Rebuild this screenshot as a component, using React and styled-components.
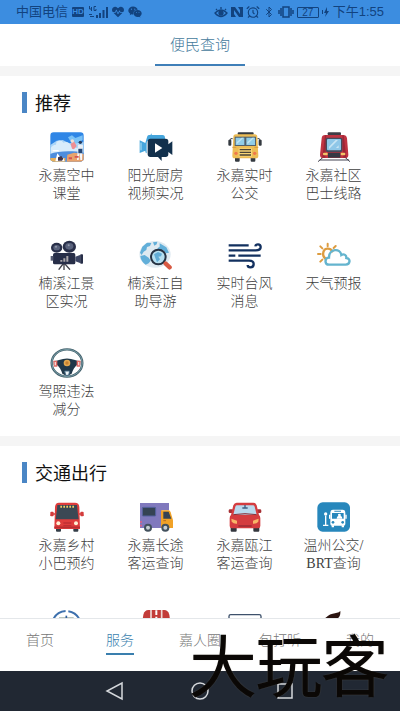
import React from "react";
import styled, { createGlobalStyle } from "styled-components";
import { AlarmClock, Bluetooth } from "lucide-react";
import { FaHeartbeat, FaWeixin } from "react-icons/fa";

const GlobalStyle = createGlobalStyle`
  * {
    box-sizing: border-box;
  }

  body {
    margin: 0;
    background: #fff;
    font-family: "Liberation Serif", "Noto Sans CJK SC", serif;
    font-weight: 300;
  }

  button {
    margin: 0;
    padding: 0;
    border: 0;
    background: none;
    font: inherit;
    cursor: pointer;
  }
`;

const Screen = styled.div`
  display: flex;
  flex-direction: column;
  height: 100vh;
  overflow: hidden;
`;

const StatusBar = styled.header`
  display: flex;
  flex: none;
  align-items: center;
  justify-content: space-between;
  height: 24px;
  padding: 0 16px;
  background: #3c8de0;
  color: #12437f;
  font-family: "Liberation Sans", "Noto Sans CJK SC", sans-serif;
  font-size: 13px;
  font-weight: 400;
  line-height: 24px;
`;

const StatusGroup = styled.div`
  display: flex;
  align-items: center;
  gap: ${(props) => props.$gap}px;

  svg {
    display: block;
    flex: none;
  }
`;

const HdBadge = styled.span`
  width: 12px;
  height: 10px;
  border-radius: 1px;
  background: #12437f;
  color: #3c8de0;
  font-size: 8px;
  font-weight: 700;
  line-height: 10px;
  text-align: center;
`;

const Battery = styled.span`
  width: 22px;
  height: 11px;
  border: 1px solid #12437f;
  border-radius: 1px;
  font-size: 10px;
  line-height: 10px;
  text-align: center;
`;

const TopTabs = styled.nav`
  display: flex;
  flex: none;
  justify-content: center;
  height: 42px;
  background: #fff;
`;

const TopTab = styled.button`
  width: 90px;
  border-bottom: 2px solid #3f7fb8;
  color: #447a9c;
  font-size: 15px;
  line-height: 42px;
`;

const Content = styled.main`
  display: flex;
  flex: 1;
  flex-direction: column;
  gap: 10px;
  min-height: 0;
  padding-top: 10px;
  overflow: hidden;
  background: #f5f5f5;
`;

const Section = styled.section`
  flex: none;
  padding: 16px 22px 18px;
  background: #fff;
`;

const SectionTitle = styled.h2`
  height: 21px;
  margin: 0 0 19px;
  padding-left: 8px;
  border-left: 5px solid #4a86c5;
  color: #111;
  font-size: 18px;
  font-weight: 400;
  line-height: 24px;
`;

const Grid = styled.div`
  display: grid;
  grid-template-columns: repeat(4, 1fr);
  row-gap: 38px;
`;

const Tile = styled.button`
  display: flex;
  flex-direction: column;
  align-items: center;
  gap: 5px;
  height: 70px;
`;

const TileIcon = styled.svg`
  display: block;
  flex: none;
  width: 34px;
  height: 30px;
`;

const TileLabel = styled.span`
  color: #404040;
  font-size: 14px;
  line-height: 18px;
  text-align: center;
  white-space: pre;
`;

const BottomNav = styled.nav`
  display: grid;
  flex: none;
  grid-template-columns: repeat(5, 1fr);
  height: 53px;
  border-top: 1px solid #e4e7ea;
  background: #fff;
`;

const NavItem = styled.button`
  display: flex;
  flex-direction: column;
  align-items: center;
  padding-top: 10px;
  color: ${(props) => (props.$active ? "#3a7fae" : "#777")};
  font-size: 14px;
  line-height: 24px;

  span {
    height: 26px;
    border-bottom: 2px solid
      ${(props) => (props.$active ? "#3a7fae" : "transparent")};
  }
`;

const SystemBar = styled.footer`
  display: flex;
  flex: none;
  align-items: center;
  justify-content: center;
  gap: 65px;
  height: 40px;
  background: #212833;

  button {
    height: 20px;
  }

  svg {
    display: block;
  }
`;

const Watermark = styled.div`
  position: fixed;
  right: 12px;
  bottom: 9px;
  color: #0b0806;
  font-family: "Noto Sans CJK SC", sans-serif;
  font-size: 66px;
  font-weight: 300;
  line-height: 80px;
  white-space: nowrap;
  pointer-events: none;
  -webkit-text-stroke: 2px #0b0806;
  text-shadow: 0 0 2px #b5a581;
`;

const Icon = ({ children }) => (
  <TileIcon viewBox="0 0 102 90" aria-hidden="true">
    {children}
  </TileIcon>
);

const ClassroomIcon = () => (
  <Icon>
    <clipPath id="classroom">
      <rect x="1" y="1" width="100" height="88" rx="10" />
    </clipPath>
    <g clipPath="url(#classroom)">
      <rect width="102" height="90" fill="#2f86e6" />
      <path d="M0 40l20-14 18-2 20 10 44-4v60H0z" fill="#a9d4f7" />
      <path d="M18 38c0-14 16-16 22-6 12-6 22 2 24 12l26 6v20H2V48c4-6 8-10 16-10z" fill="#d8ecfb" />
      <path d="M54 16l12-6 10 8 22-8v14L80 34l-14 2z" fill="#7cc3f6" />
      <path d="M0 66c24-10 70-10 102-4v28H0z" fill="#4d8ddd" />
      <path d="M52 68l20-6 30 4v24H50z" fill="#e9a36c" />
      <path d="M0 78h46v12H0z" fill="#e8b05c" />
      <path d="M84 40h14l-2 44h-5l-2-24-3 24h-5z" fill="#f4f6fa" />
      <path d="M84 38h14v10H84z" fill="#e8eef6" />
      <path d="M85 50h12v14H85z" fill="#254777" />
      <circle cx="91" cy="31" r="5" fill="#293b5d" />
      <path d="M62 36l10-8 8 14-8 10-6-2z" fill="#ee8f94" />
      <circle cx="67" cy="27" r="5" fill="#f4ddd2" />
      <path d="M22 64l8 10 10 4 4 10H16z" fill="#fff" />
      <path d="M24 76l10-4 6 8-4 6H24z" fill="#40364d" />
      <path d="M56 76h10v6H56zM74 72h12v5H74z" fill="#d45454" />
      <path d="M8 54h18v4H8z" fill="#fff" />
    </g>
  </Icon>
);

const VideoIcon = () => (
  <Icon>
    <path d="M24 16c1-7 5-7 10-7l4-5v5h32c6 0 8 4 8 9v6H34c-8 0-11 4-11 11v29c-3-1-4-3-4-8l-17 7V25l17 8z" fill="#45a5dc" />
    <path d="M34 20h46c6 0 8 3 8 8v9l12-9v41l-12-9v7c0 6-3 8-8 8H68v12L57 75H34c-5 0-8-3-8-8V29c0-6 3-9 8-9z" fill="#12304c" />
    <path d="M48 34l22 14-22 14z" fill="#fff" />
    <path d="M6 32v23" stroke="#b5e2f5" strokeWidth="3" />
  </Icon>
);

const YellowBusIcon = () => (
  <Icon>
    <rect x="29" y="1" width="48" height="8" rx="3" fill="#343a40" />
    <path d="M14 20H9q-3 0-3 5v8M88 20h5q3 0 3 5v8" stroke="#343a40" strokeWidth="3" fill="none" />
    <rect x="1" y="23" width="9" height="18" rx="3" fill="#343a40" />
    <rect x="92" y="23" width="9" height="18" rx="3" fill="#343a40" />
    <rect x="21" y="74" width="14" height="15" rx="3" fill="#343a40" />
    <rect x="68" y="74" width="14" height="15" rx="3" fill="#343a40" />
    <path d="M24 7h56q8 0 8 8l3 56q0 8-7 8H20q-7 0-7-8l3-56q0-8 8-8z" fill="#edbd55" />
    <path d="M20 14h64v28H20z" fill="#52616c" />
    <path d="M23 17h26v22H23zM55 17h26v22H55z" fill="#91cde8" />
    <path d="M26 31l15-14h6L26 37zM58 31l15-14h6L58 37z" fill="#bfe4f2" />
    <path d="M32 49h40v25H32z" fill="#f9d676" />
    <path d="M35 53h34M35 61h34M35 69h34" stroke="#4b4538" strokeWidth="4" />
    <circle cx="24" cy="64" r="5" fill="#ef784c" />
    <circle cx="80" cy="64" r="5" fill="#ef784c" />
    <path d="M13 46h12M79 46h12" stroke="#d99b3d" strokeWidth="3" />
  </Icon>
);

const TramIcon = () => (
  <Icon>
    <rect x="32" y="1" width="40" height="9" rx="3" fill="#3f3c46" />
    <path d="M18 76L3 89M84 76l15 13M8 84h88" stroke="#454552" strokeWidth="3" />
    <path d="M24 9h55q9 0 11 10l4 49q0 10-9 10H18q-9 0-9-10l5-49q1-10 10-10z" fill="#bf3342" />
    <path d="M24 10l-8 67h9l3-67zM80 10l8 67h-9l-3-67z" fill="#9c2637" />
    <rect x="26" y="17" width="50" height="43" rx="5" fill="#464b5c" />
    <rect x="30" y="21" width="42" height="34" rx="3" fill="#8fc7e8" />
    <path d="M36 44l20-20h7L36 51zM57 48l8-8v8z" fill="#c8e5f4" />
    <rect x="33" y="62" width="37" height="15" fill="#363844" />
    <rect x="18" y="62" width="14" height="8" rx="3" fill="#f3c468" />
    <rect x="71" y="62" width="14" height="8" rx="3" fill="#f3c468" />
  </Icon>
);

const ProjectorIcon = () => (
  <Icon>
    <path d="M39 72L26 89M42 72v18M45 72l15 17" stroke="#44444c" strokeWidth="4" />
    <ellipse cx="20" cy="23" rx="17" ry="15" fill="#292f49" />
    <ellipse cx="58" cy="20" rx="20" ry="18" fill="#292f49" />
    <ellipse cx="20" cy="23" rx="10" ry="8" fill="#5a637d" />
    <ellipse cx="58" cy="19" rx="12" ry="10" fill="#5a637d" />
    <circle cx="18" cy="20" r="3" fill="#969cad" />
    <circle cx="56" cy="16" r="3" fill="#969cad" />
    <rect x="9" y="39" width="67" height="34" rx="5" fill="#272e48" />
    <path d="M76 50l16-6v26l-16-6z" fill="#3c4564" />
    <rect x="91" y="43" width="8" height="28" rx="2" fill="#272e48" />
    <rect x="2" y="48" width="8" height="14" fill="#565c72" />
    <path d="M31 65h6v-5h-6zM40 65h6V55h-6zM49 65h6V48h-6z" fill="#aaa6a9" />
  </Icon>
);

const GlobeIcon = () => (
  <Icon>
    <ellipse cx="48" cy="43" rx="47" ry="40" fill="#dfeaf1" />
    <path d="M10 20l14-12 13 1-4 9-9 3-2 9-8 5-6 10-5-7zM42 7l13-2-2 8-7 4zM62 10l20 12 8 16-9 2-8-9-10 3-8-9 7-5zM4 48l13-3 12 8 6 9-6 8-9 4C11 68 5 60 4 48z" fill="#62afd9" />
    <circle cx="58" cy="51" r="22" fill="#b6dff0" stroke="#263243" strokeWidth="6" />
    <path d="M45 43l12-7 12 5-3 8-8 1 5 8-9 9-5-13z" fill="#62acd6" />
    <path d="M74 66l6 6" stroke="#263243" strokeWidth="6" />
    <path d="M80 71l12 11" stroke="#d85a43" strokeWidth="13" strokeLinecap="round" />
  </Icon>
);

const WindIcon = () => (
  <Icon>
    <g fill="none" stroke="#12305f" strokeWidth="7">
      <path d="M2 16h60M2 31h81q15 0 15-10 0-8-8-8-7 0-8 6" />
      <path d="M2 47h20M31 47h67" />
      <path d="M2 62h43M2 62h61q14 0 14 10 0 10-10 10-8 0-8-7" />
    </g>
  </Icon>
);

const WeatherIcon = () => (
  <Icon>
    <g fill="none" strokeLinecap="round">
      <path d="M32 11v8M10 19l6 6M3 42h8M10 65l6-6M56 18l-6 6" stroke="#dd9c40" strokeWidth="6" />
      <path d="M27 57c-12-6-12-29 4-31 8-1 12 3 15 8" stroke="#dd9c40" strokeWidth="7" />
      <path d="M36 74c-14 0-14-21 0-21 0-28 35-29 37-8 8-5 16 1 15 9 14 1 12 20-2 20z" stroke="#64b4ce" strokeWidth="7" />
    </g>
  </Icon>
);

const WheelIcon = () => (
  <Icon>
    <ellipse cx="51" cy="45" rx="46" ry="41" fill="#fff" stroke="#45626d" strokeWidth="7" />
    <ellipse cx="51" cy="45" rx="46" ry="41" fill="none" stroke="#759aa4" strokeWidth="3" />
    <path d="M11 39q10 0 16-3 24-9 48 0 6 3 16 3v13H80q-9 7-15 25-14 9-28 0-6-18-15-25H11z" fill="#203849" />
    <path d="M10 38h12v18H12zM80 38h12l-2 18H80z" fill="#e26b66" />
    <path d="M14 42h4v10h-4zM84 42h4v10h-4z" fill="#f3d7d3" />
    <path d="M44 69h15l-3 13h-9z" fill="#eef4f7" stroke="#416781" strokeWidth="3" />
    <circle cx="51" cy="45" r="10" fill="#e3a84f" />
    <circle cx="51" cy="45" r="5" fill="#c78231" />
  </Icon>
);

const RedBusIcon = () => (
  <Icon>
    <path d="M16 36H7q-3 0-3 6M86 36h9q3 0 3 6" stroke="#c84345" strokeWidth="5" fill="none" />
    <rect x="1" y="29" width="10" height="14" rx="3" fill="#d43b3c" />
    <rect x="91" y="29" width="10" height="14" rx="3" fill="#d43b3c" />
    <rect x="18" y="74" width="15" height="15" rx="3" fill="#343e48" />
    <rect x="70" y="74" width="15" height="15" rx="3" fill="#343e48" />
    <path d="M27 2h48q12 0 13 13l2 66H13l2-66Q16 2 27 2z" fill="#df3d3c" />
    <path d="M22 9h59q2 22 5 43H17q3-21 5-43z" fill="#3b4854" />
    <path d="M31 14h43" stroke="#f2cf62" strokeWidth="6" strokeDasharray="5 4" />
    <circle cx="25" cy="64" r="6" fill="#fff1d5" />
    <circle cx="78" cy="64" r="6" fill="#fff1d5" />
    <path d="M40 63h24M40 71h24" stroke="#c02f33" strokeWidth="4" />
    <path d="M13 76h77" stroke="#b82e31" strokeWidth="5" />
  </Icon>
);

const VanIcon = () => (
  <Icon>
    <path d="M3 3h87v22H68v53H3z" fill="#8079bd" />
    <rect x="10" y="16" width="40" height="26" rx="2" fill="#354354" stroke="#5563a0" strokeWidth="3" />
    <path d="M66 25h23q4 0 6 6l7 24v23H66z" fill="#f1a227" />
    <path d="M73 29h16l8 21H73z" fill="#354354" />
    <path d="M3 60h6M3 71h6" stroke="#dd6087" strokeWidth="5" />
    <path d="M73 56h8" stroke="#b66e21" strokeWidth="3" />
    <g fill="#c6ced5" stroke="#42515d" strokeWidth="6">
      <circle cx="27" cy="77" r="9" />
      <circle cx="79" cy="77" r="9" />
    </g>
  </Icon>
);

const CarIcon = () => (
  <Icon>
    <rect x="8" y="70" width="18" height="19" rx="3" fill="#34373e" />
    <rect x="76" y="70" width="18" height="19" rx="3" fill="#34373e" />
    <rect x="2" y="22" width="14" height="11" rx="4" fill="#a73035" />
    <rect x="86" y="22" width="14" height="11" rx="4" fill="#a73035" />
    <path d="M26 2h50q7 0 10 8l7 29q4 3 4 10v23q0 7-7 7H12q-7 0-7-7V49q0-7 4-10l7-29q3-8 10-8z" fill="#d43c3f" />
    <path d="M27 10h48q4 0 5 4l6 24H16l6-24q1-4 5-4z" fill="#b9d9ed" />
    <path d="M16 38q35-6 70 0" stroke="#873038" strokeWidth="3" fill="none" />
    <path d="M51 9v7M43 18h16" stroke="#3f5f83" strokeWidth="4" />
    <path d="M10 50l17 6v9q-10 1-16-6zM92 50l-17 6v9q10 1 16-6z" fill="#f8b567" />
    <path d="M31 72h40" stroke="#942832" strokeWidth="4" />
  </Icon>
);

const BrtIcon = () => (
  <Icon>
    <rect x="1" y="1" width="98" height="88" rx="16" fill="#2787bc" />
    <path d="M26 41v28M18 70h16" stroke="#fff" strokeWidth="4" />
    <circle cx="26" cy="36" r="5" fill="#fff" />
    <path d="M48 23h29q8 0 8 10v33q0 5-5 5H45q-5 0-5-5V33q0-10 8-10z" fill="#fff" />
    <path d="M45 33h35v17H45zM52 26h20v3H52z" fill="#2787bc" />
    <path d="M59 50q0-7 5-8-3-7 3-7t4 7q5 1 5 8z" fill="#fff" />
    <path d="M44 70h7v6h-7zM74 70h7v6h-7zM36 38h4v12h-4zM85 38h4v12h-4z" fill="#fff" />
    <circle cx="48" cy="61" r="4" fill="#2787bc" />
    <circle cx="77" cy="61" r="4" fill="#2787bc" />
  </Icon>
);

const DialIcon = () => (
  <Icon>
    <circle cx="49" cy="46" r="43" fill="none" stroke="#3d70ad" strokeWidth="6" strokeDasharray="44 10" transform="rotate(-82 49 46)" />
    <path d="M27 23h44" stroke="#b9c6be" strokeWidth="4" />
    <path d="M49 17v8" stroke="#315f9f" strokeWidth="5" />
  </Icon>
);

const RoadIcon = () => (
  <Icon>
    <path d="M28 0h48q11 0 15 14l4 30H9l4-30Q17 0 28 0z" fill="#c23c39" />
    <path d="M36 0v40M68 0v40" stroke="#eed7d3" strokeWidth="5" />
    <path d="M52 1v14M52 20v10" stroke="#fff" strokeWidth="6" />
  </Icon>
);

const CardIcon = () => (
  <Icon>
    <rect x="3" y="14" width="96" height="70" rx="5" fill="#fff" stroke="#3d516b" strokeWidth="4" />
  </Icon>
);

const LeafIcon = () => (
  <Icon>
    <path d="M18 27c10-2 13-13 29-16 10-2 17-2 23-8 1 12-3 20-10 23h15v5H18z" fill="#2b1410" />
  </Icon>
);

const recommended = [
  { label: "永嘉空中\n课堂", icon: ClassroomIcon },
  { label: "阳光厨房\n视频实况", icon: VideoIcon },
  { label: "永嘉实时\n公交", icon: YellowBusIcon },
  { label: "永嘉社区\n巴士线路", icon: TramIcon },
  { label: "楠溪江景\n区实况", icon: ProjectorIcon },
  { label: "楠溪江自\n助导游", icon: GlobeIcon },
  { label: "实时台风\n消息", icon: WindIcon },
  { label: "天气预报", icon: WeatherIcon },
  { label: "驾照违法\n减分", icon: WheelIcon },
];

const traffic = [
  { label: "永嘉乡村\n小巴预约", icon: RedBusIcon },
  { label: "永嘉长途\n客运查询", icon: VanIcon },
  { label: "永嘉瓯江\n客运查询", icon: CarIcon },
  { label: "温州公交/\nBRT查询", icon: BrtIcon },
  { icon: DialIcon },
  { icon: RoadIcon },
  { icon: CardIcon },
  { icon: LeafIcon },
];

const navItems = ["首页", "服务", "嘉人圈", "包打听", "我的"];

const ServiceSection = ({ title, items }) => (
  <Section>
    <SectionTitle>{title}</SectionTitle>
    <Grid>
      {items.map(({ label, icon: ItemIcon }, index) => (
        <Tile key={index} type="button">
          <ItemIcon />
          {label && <TileLabel>{label}</TileLabel>}
        </Tile>
      ))}
    </Grid>
  </Section>
);

const SignalIcon = () => (
  <svg width="20" height="12" viewBox="0 0 20 12" fill="none" stroke="currentColor">
    <path d="M1.5 0v3H4M3.5 1v4M8 .5H6v4h2V3M1 8.5h3M2 10.5h4" />
    <path d="M9 12V9M12 12V7M15.5 12V4M19 12V1" strokeWidth="2" />
  </svg>
);

const EyeIcon = () => (
  <svg width="14" height="12" viewBox="0 0 14 12" fill="none" stroke="currentColor" strokeWidth="1.3">
    <path d="M1 7q6-6 12 0-6 7-12 0zM2 3l1 1M7 1v2M12 3l-1 1" />
    <circle cx="7" cy="7" r="2" fill="currentColor" />
  </svg>
);

const NfcIcon = () => (
  <svg width="12" height="12" viewBox="0 0 12 12">
    <path d="M0 1h4l5 7V4L7 1h5v10H8L3 4v4l2 3H0z" fill="currentColor" />
  </svg>
);

const VibrateIcon = () => (
  <svg width="16" height="12" viewBox="0 0 16 12" fill="none" stroke="currentColor" strokeWidth="1.5">
    <rect x="5" y="1" width="6" height="10" />
    <path d="M3 2v8M1 4v4M13 2v8M15 4v4" />
  </svg>
);

const BoltIcon = () => (
  <svg width="8" height="10" viewBox="0 0 8 10" fill="currentColor">
    <path d="M0 3h1v4H0zM5 0L2 6h2l-1 4 4-6H5z" />
  </svg>
);

export default function App() {
  return (
    <>
      <GlobalStyle />
      <Screen>
        <StatusBar>
          <StatusGroup $gap={4}>
            <span>中国电信</span>
            <HdBadge>HD</HdBadge>
            <SignalIcon />
            <FaHeartbeat size={12} />
            <FaWeixin size={14} />
          </StatusGroup>
          <StatusGroup $gap={3}>
            <EyeIcon />
            <NfcIcon />
            <AlarmClock size={14} />
            <Bluetooth size={12} />
            <VibrateIcon />
            <Battery>27</Battery>
            <BoltIcon />
            <span>下午1:55</span>
          </StatusGroup>
        </StatusBar>
        <TopTabs>
          <TopTab type="button">便民查询</TopTab>
        </TopTabs>
        <Content>
          <ServiceSection title="推荐" items={recommended} />
          <ServiceSection title="交通出行" items={traffic} />
        </Content>
        <BottomNav>
          {navItems.map((item) => (
            <NavItem key={item} type="button" $active={item === "服务"}>
              <span>{item}</span>
            </NavItem>
          ))}
        </BottomNav>
        <SystemBar>
          <button type="button" aria-label="返回">
            <svg width="20" height="20" viewBox="0 0 20 20" fill="none" stroke="#d5d8dc" strokeWidth="1.5">
              <path d="M17 2v16L2 10z" />
            </svg>
          </button>
          <button type="button" aria-label="主屏幕">
            <svg width="20" height="20" viewBox="0 0 20 20" fill="none" stroke="#d5d8dc" strokeWidth="1.5">
              <circle cx="10" cy="10" r="8" />
            </svg>
          </button>
          <button type="button" aria-label="最近任务">
            <svg width="20" height="20" viewBox="0 0 20 20" fill="none" stroke="#d5d8dc" strokeWidth="1.5">
              <path d="M3 3h14v14H3z" />
            </svg>
          </button>
        </SystemBar>
      </Screen>
      <Watermark>大玩客</Watermark>
    </>
  );
}
